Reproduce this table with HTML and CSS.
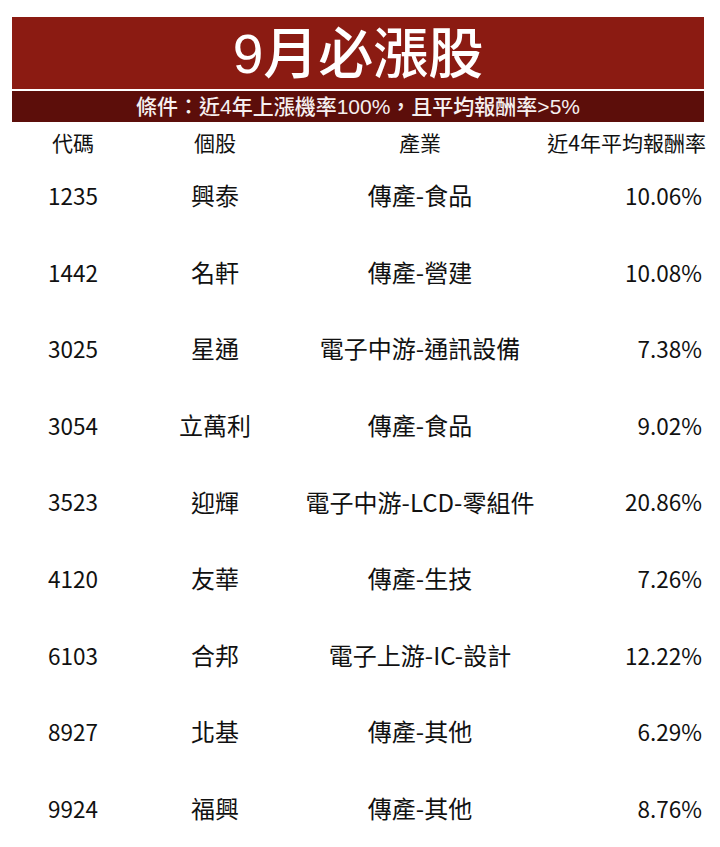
FILE: index.html
```html
<!DOCTYPE html>
<html lang="zh-Hant">
<head>
<meta charset="utf-8">
<title>9月必漲股</title>
<link rel="stylesheet" href="styles.css">
</head>
<body>
<div class="page">
  <div class="title-bar">9月必漲股</div>
  <div class="sub-bar">條件：近4年上漲機率100%，且平均報酬率&gt;5%</div>
  <div class="table">
    <div class="row head">
      <div class="c1">代碼</div><div class="c2">個股</div><div class="c3">產業</div><div class="c4">近4年平均報酬率</div>
    </div>
    <div class="row"><div class="c1">1235</div><div class="c2">興泰</div><div class="c3">傳產-食品</div><div class="c4">10.06%</div></div>
    <div class="row"><div class="c1">1442</div><div class="c2">名軒</div><div class="c3">傳產-營建</div><div class="c4">10.08%</div></div>
    <div class="row"><div class="c1">3025</div><div class="c2">星通</div><div class="c3">電子中游-通訊設備</div><div class="c4">7.38%</div></div>
    <div class="row"><div class="c1">3054</div><div class="c2">立萬利</div><div class="c3">傳產-食品</div><div class="c4">9.02%</div></div>
    <div class="row"><div class="c1">3523</div><div class="c2">迎輝</div><div class="c3">電子中游-LCD-零組件</div><div class="c4">20.86%</div></div>
    <div class="row"><div class="c1">4120</div><div class="c2">友華</div><div class="c3">傳產-生技</div><div class="c4">7.26%</div></div>
    <div class="row"><div class="c1">6103</div><div class="c2">合邦</div><div class="c3">電子上游-IC-設計</div><div class="c4">12.22%</div></div>
    <div class="row"><div class="c1">8927</div><div class="c2">北基</div><div class="c3">傳產-其他</div><div class="c4">6.29%</div></div>
    <div class="row"><div class="c1">9924</div><div class="c2">福興</div><div class="c3">傳產-其他</div><div class="c4">8.76%</div></div>
  </div>
</div>
</body>
</html>
```

FILE: styles.css
```css
html, body {
  margin: 0;
  padding: 0;
  background: #fff;
}
body {
  font-family: "Noto Sans CJK TC", "Noto Sans", sans-serif;
  color: #111;
}
.page {
  padding: 17px 16px 0 12px;
  width: 720px;
  box-sizing: border-box;
}
.title-bar {
  background: #8b1b12;
  color: #fff;
  height: 72px;
  display: flex;
  align-items: center;
  justify-content: center;
  font-family: "Liberation Sans", "Noto Sans CJK TC", sans-serif;
  font-size: 55px;
  font-weight: 500;
  line-height: 1;
  padding-top: 2px;
  box-sizing: border-box;
}
.sub-bar {
  margin-top: 2px;
  background: #5c0e0a;
  color: #f6f0f0;
  height: 31px;
  display: flex;
  align-items: center;
  justify-content: center;
  font-family: "Liberation Sans", "Noto Sans CJK TC", sans-serif;
  font-size: 21px;
  font-weight: 500;
  line-height: 1;
}
.table {
  display: flex;
  flex-direction: column;
}
.row {
  display: grid;
  grid-template-columns: 122px 162px 248px 160px;
  height: 76.6px;
  align-items: center;
  font-size: 24px;
  font-weight: 400;
  line-height: 1;
}
.row .c1,
.row .c4 {
  font-size: 22.5px;
}
.row.head {
  height: 35px;
  padding-top: 6px;
  box-sizing: border-box;
  font-size: 21px;
}
.row.head .c1,
.row.head .c4 {
  font-size: 21px;
}
.c1, .c2, .c3 {
  text-align: center;
}
.c4 {
  text-align: right;
  white-space: nowrap;
}
.row:not(.head) .c4 {
  padding-right: 2px;
}
.row.head .c4 {
  margin-right: -2px;
}
```
